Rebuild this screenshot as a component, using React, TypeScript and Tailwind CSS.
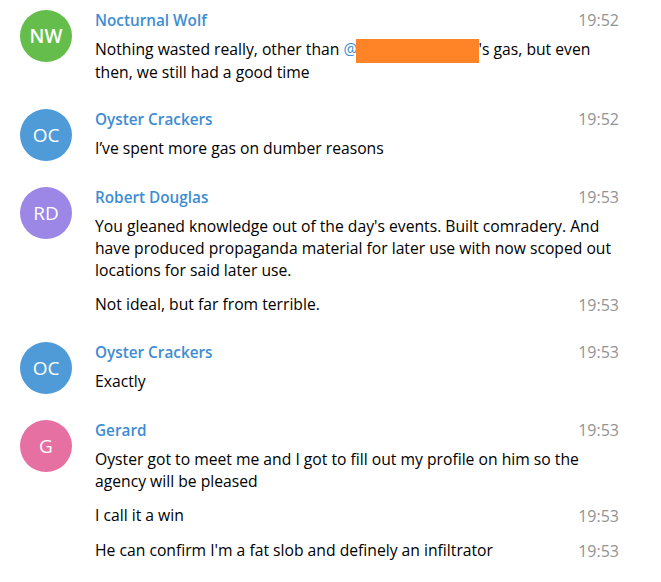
import React from "react";

type Group = {
  initials: string;
  name: string;
  color: string;
  time: string;
  first: React.ReactNode;
  followUps?: { text: string; time: string }[];
  boldInitials?: boolean;
};

const groups: Group[] = [
  {
    initials: "NW",
    name: "Nocturnal Wolf",
    color: "bg-[#65bd4c]",
    time: "19:52",
    boldInitials: true,
    first: (
      <>
        Nothing wasted really, other than{" "}
        <span className="text-[#3e8dd3]">@</span>
        <span className="inline-block w-[123px] h-[24px] -my-[2px] -ml-[2px] bg-[#fe8427] align-[-6px]" />
        's gas, but even
        <br />
        then, we still had a good time
      </>
    ),
  },
  {
    initials: "OC",
    name: "Oyster Crackers",
    color: "bg-[#4f9bd8]",
    time: "19:52",
    first: <>I’ve spent more gas on dumber reasons</>,
  },
  {
    initials: "RD",
    name: "Robert Douglas",
    color: "bg-[#9c86e6]",
    time: "19:53",
    first: (
      <>
        You gleaned knowledge out of the day's events. Built comradery. And
        <br />
        have produced propaganda material for later use with now scoped out
        <br />
        locations for said later use.
      </>
    ),
    followUps: [{ text: "Not ideal, but far from terrible.", time: "19:53" }],
  },
  {
    initials: "OC",
    name: "Oyster Crackers",
    color: "bg-[#4f9bd8]",
    time: "19:53",
    first: <>Exactly</>,
  },
  {
    initials: "G",
    name: "Gerard",
    color: "bg-[#e570a1]",
    time: "19:53",
    first: (
      <>
        Oyster got to meet me and I got to fill out my profile on him so the
        <br />
        agency will be pleased
      </>
    ),
    followUps: [
      { text: "I call it a win", time: "19:53" },
      { text: "He can confirm I'm a fat slob and definely an infiltrator", time: "19:53" },
    ],
  },
];

const App: React.FC = () => {
  return (
    <div className="w-[661px] h-[582px] bg-white overflow-hidden font-['Open_Sans',sans-serif] text-[15.7px] text-black">
      <div className="flex flex-col gap-[26px] pt-[10px]">
        {groups.map((g, i) => (
          <div key={i} className="flex pl-[20px] pr-[42px]">
            <div
              className={`w-[52px] h-[52px] rounded-full flex items-center justify-center text-white text-[19px] shrink-0 ${g.color} ${
                g.boldInitials ? "font-semibold" : "font-normal"
              }`}
            >
              {g.initials}
            </div>
            <div className="ml-[23px] flex-1">
              <div className="flex justify-between items-center h-[20px]">
                <span className="font-semibold text-[#3e8dd3] text-[15.3px]">{g.name}</span>
                <span className="text-[#939393] text-[16px]">{g.time}</span>
              </div>
              <p className="mt-[8px] leading-[22px] whitespace-nowrap">{g.first}</p>
              {g.followUps?.map((f, j) => (
                <div key={j} className="flex justify-between items-center h-[22px] mt-[13px]">
                  <span>{f.text}</span>
                  <span className="text-[#939393] text-[16px]">{f.time}</span>
                </div>
              ))}
            </div>
          </div>
        ))}
      </div>
    </div>
  );
};

export default App;
